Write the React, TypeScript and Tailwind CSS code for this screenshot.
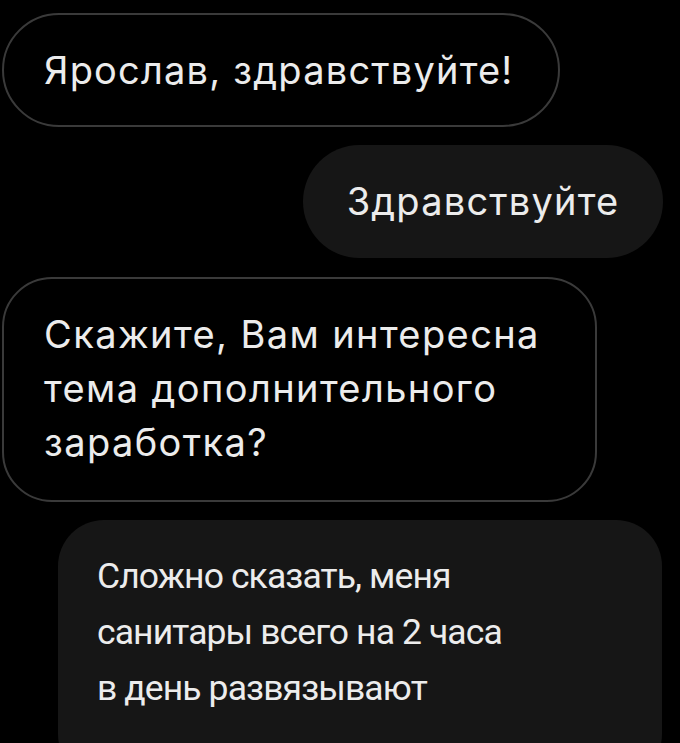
const incoming = "border-2 border-[#3a3a3a] text-[#ececec]";
const outgoing = "bg-[#161616] text-[#ececec]";

export default function App() {
  return (
    <div className="h-[743px] w-[680px] overflow-hidden bg-black">
      <div className="flex flex-col" style={{ fontFamily: "Inter, sans-serif" }}>
        <div
          className={`ml-[2px] mt-[13px] flex h-[114px] w-[558px] items-center rounded-full pl-[40px] ${incoming}`}
        >
          <span className="text-[38px] tracking-[1.2px]">Ярослав, здравствуйте!</span>
        </div>

        <div
          className={`mr-[17px] mt-[18px] flex h-[113px] w-[360px] items-center justify-center self-end rounded-full ${outgoing}`}
        >
          <span className="text-[38px] tracking-[1.2px]">Здравствуйте</span>
        </div>

        <div
          className={`ml-[2px] mt-[19px] h-[225px] w-[595px] rounded-[50px] pl-[40px] pt-[28px] ${incoming}`}
        >
          <p className="text-[38px] leading-[54px] tracking-[1.4px]">
            Скажите, Вам интересна
            <br />
            тема дополнительного
            <br />
            заработка?
          </p>
        </div>

        <div
          className={`ml-[58px] mt-[18px] h-[260px] w-[604px] rounded-[46px] pl-[39px] pt-[28px] ${outgoing}`}
          style={{ fontFamily: "Roboto, sans-serif" }}
        >
          <p className="text-[35.5px] leading-[56px] tracking-[-0.9px]">
            Сложно сказать, меня
            <br />
            санитары всего на 2 часа
            <br />в день развязывают
          </p>
        </div>
      </div>
    </div>
  );
}
